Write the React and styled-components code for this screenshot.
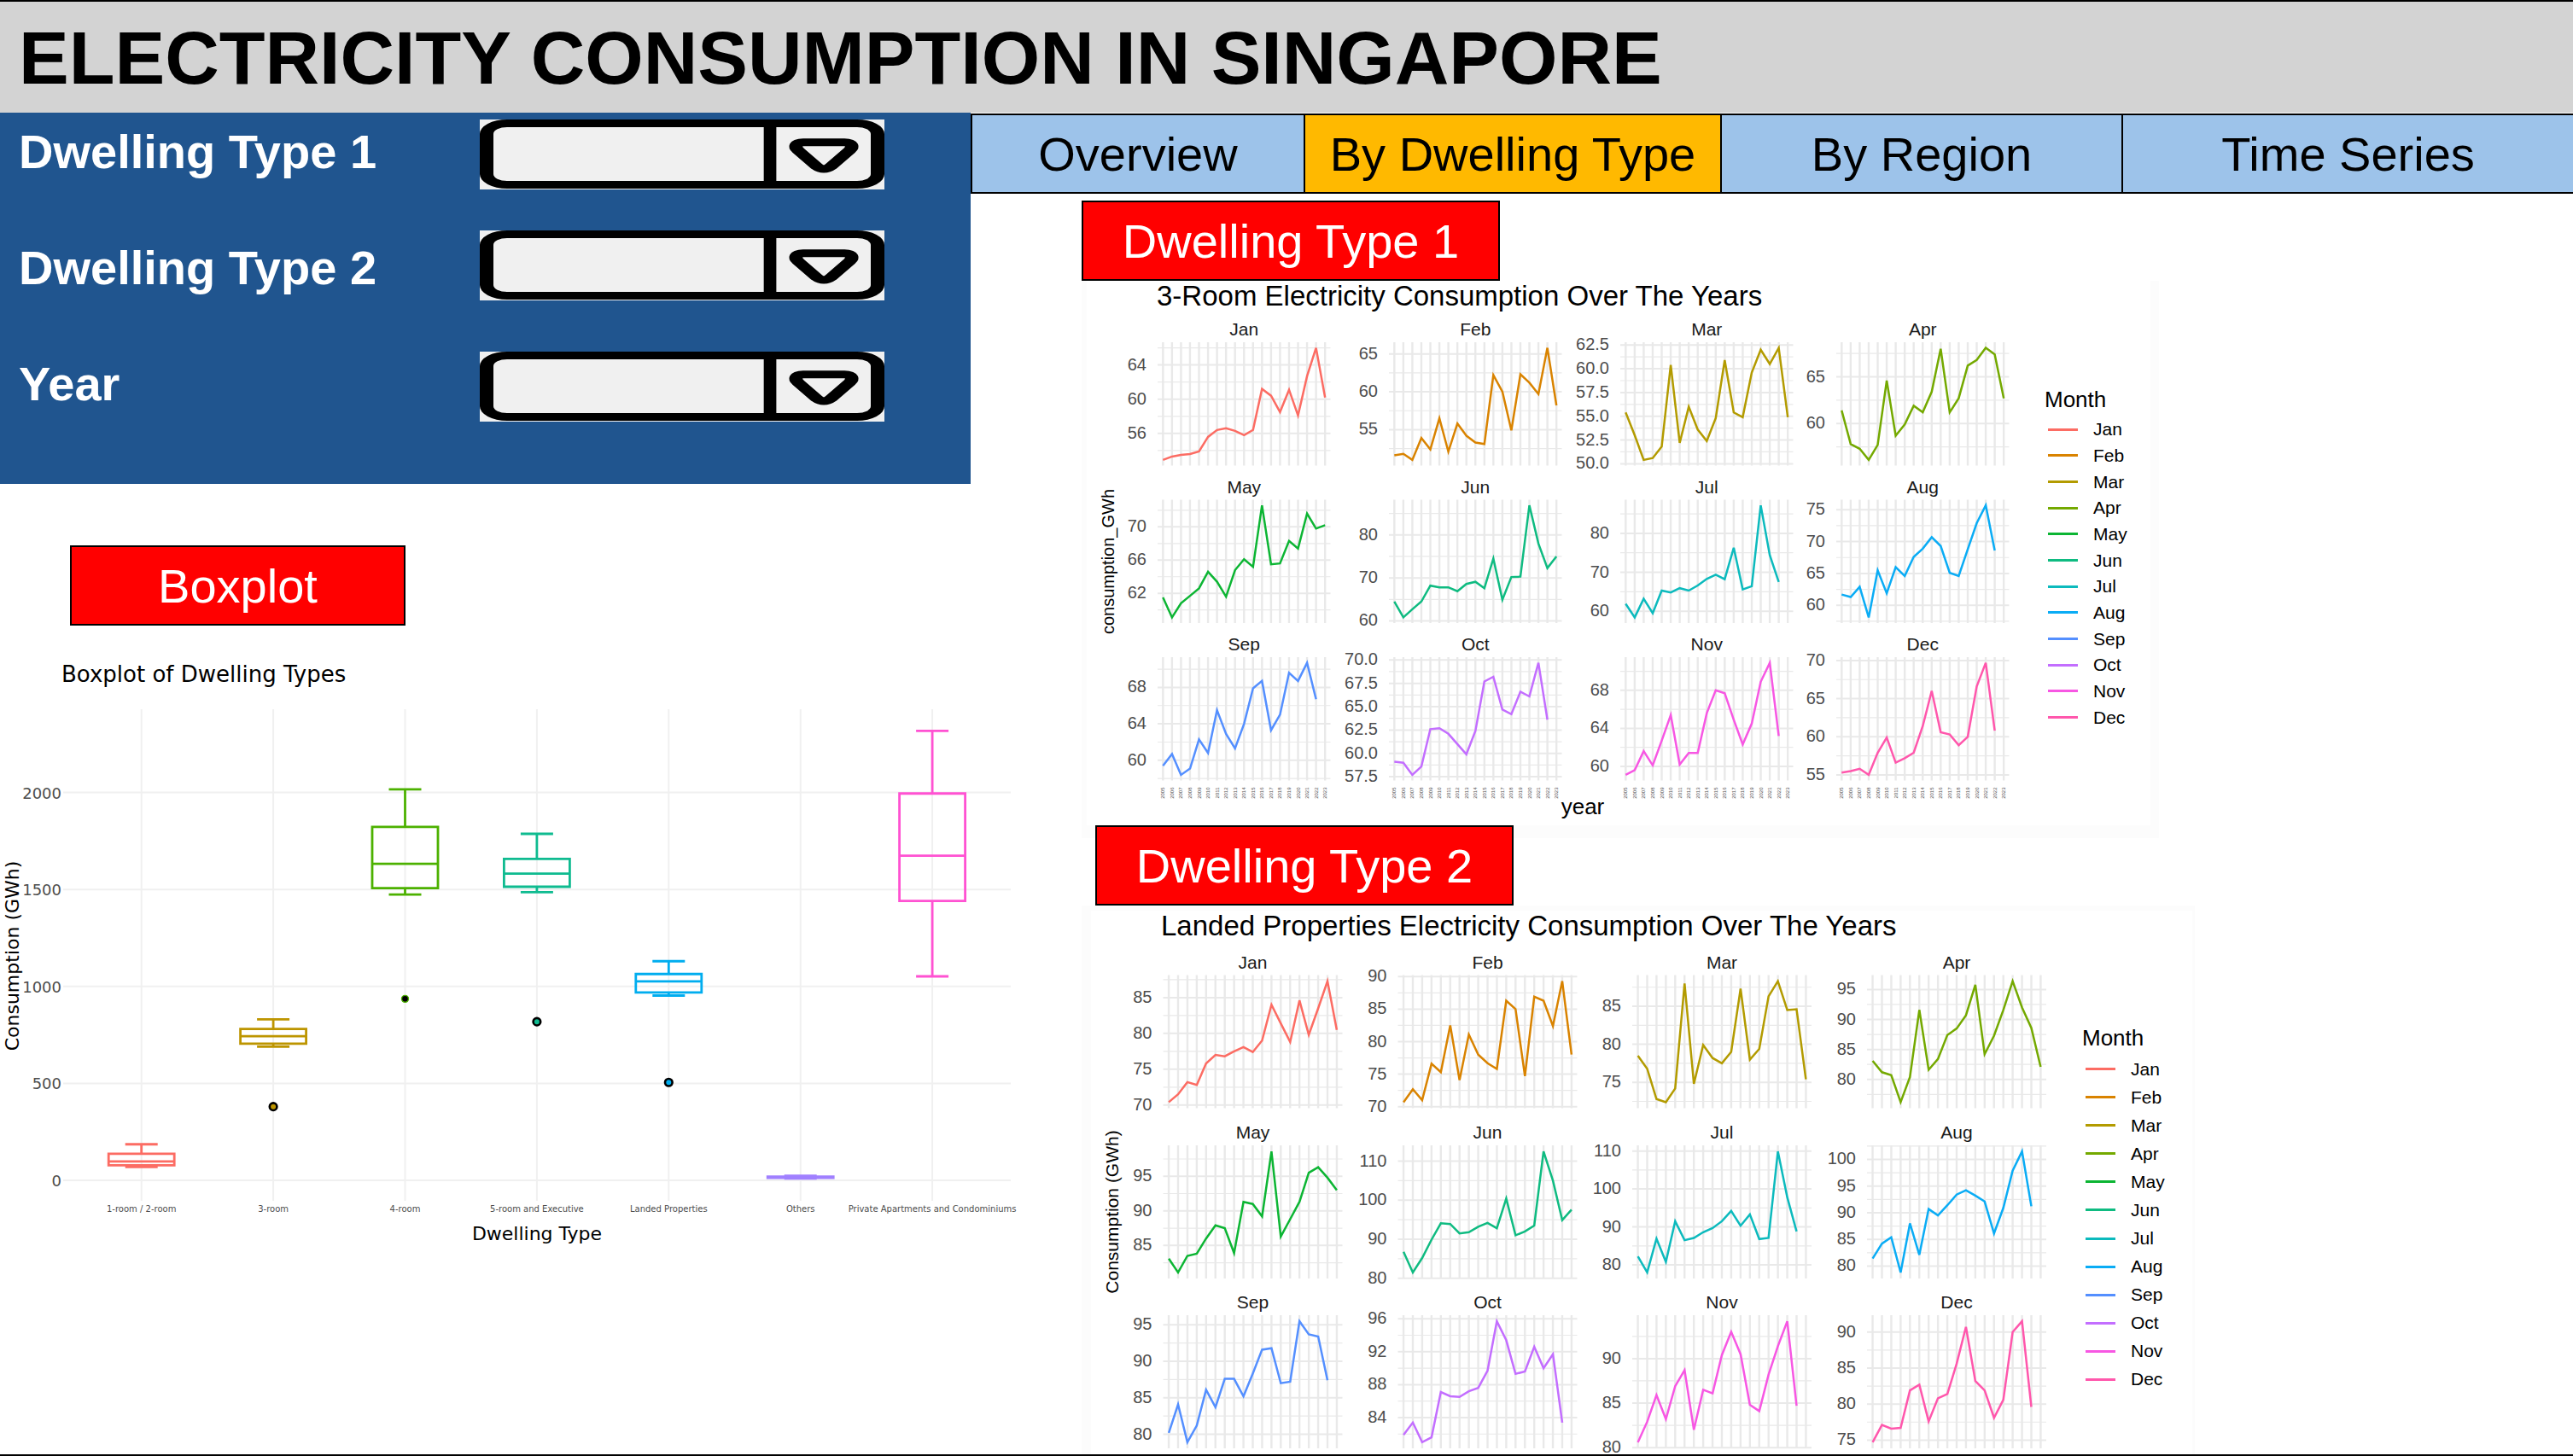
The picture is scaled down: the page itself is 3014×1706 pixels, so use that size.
import React from "react";
import styled, { createGlobalStyle } from "styled-components";

const SANS = '"Liberation Sans", Arial, sans-serif';
const WIDE = '"DejaVu Sans", Verdana, sans-serif';

const GlobalStyle = createGlobalStyle`
  *, *::before, *::after { box-sizing: border-box; }
  body { margin: 0; background: #fff; font-family: ${SANS}; color: #000; }
`;

const Page = styled.div`
  min-height: 100vh;
  display: flex;
  flex-direction: column;
  overflow: hidden;
  border-top: 2px solid #000;
  border-bottom: 2px solid #000;
`;

const Header = styled.header`
  height: 130px;
  padding: 2px 22px 0;
  display: flex;
  align-items: center;
  background: #d3d3d3;
`;

const PageTitle = styled.h1`
  margin: 0;
  font-size: 88px;
  line-height: 1;
  font-weight: 700;
`;

const Body = styled.div`
  flex: 1;
  display: grid;
  grid-template-columns: minmax(0, 1137fr) minmax(0, 1877fr);
`;

const Column = styled.div`
  display: flex;
  flex-direction: column;
  align-items: flex-start;
`;

const FilterPanel = styled.form`
  width: 100%;
  height: 435px;
  display: grid;
  grid-template-columns: 540px 474px;
  padding-left: 22px;
  background: #20558f;
`;

const FilterLabels = styled.div`
  padding-top: 14px;
  display: grid;
  grid-auto-rows: 136px;
`;

const FilterLabel = styled.label`
  color: #fff;
  font-size: 56px;
  line-height: 64px;
  font-weight: 700;
`;

const FilterFields = styled.div`
  padding-top: 8px;
  display: grid;
  grid-template-rows: 130px 142px 82px;
`;

const SelectBox = styled.div`
  display: grid;
  height: 82px;
  background: #f0f0f0;

  & > * { grid-area: 1 / 1; }
`;

const Select = styled.select`
  appearance: none;
  width: 100%;
  height: 81px;
  padding: 0 140px 0 12px;
  border: solid #000;
  border-width: 9px 16px;
  border-radius: 32px / 17px;
  background: #f0f0f0;
  font: 32px ${SANS};
`;

const SelectArrow = styled.svg`
  width: 100%;
  height: 100%;
  pointer-events: none;
`;

const Tabs = styled.nav`
  width: 100%;
  height: 94px;
  margin-top: 1px;
  display: grid;
  grid-template-columns: 388fr 488fr 470fr 529fr;
  border: solid #000;
  border-width: 2px 0 2px 2px;
`;

const Tab = styled.button`
  padding: 0;
  border: 0;
  border-left: ${(p) => (p.$first ? 0 : 2)}px solid #000;
  background: ${(p) => (p.$active ? "#ffb900" : "#9dc3ea")};
  color: #000;
  font: 56px ${SANS};
`;

const Badge = styled.h2`
  position: relative;
  margin: ${(p) => p.$margin};
  width: ${(p) => p.$width}px;
  height: 94px;
  display: flex;
  align-items: center;
  justify-content: center;
  border: 2px solid #000;
  background: #ff0000;
  color: #fff;
  font-size: 56px;
  font-weight: 400;
`;

const Results = styled.main`
  width: 100%;
  padding-left: 130px;
`;

const BoxplotFigure = styled.figure`
  margin: 41px 0 0;
`;

const BoxplotCaption = styled.figcaption`
  padding-left: 72px;
  font: 26px/32px ${WIDE};
`;

const Chart = styled.svg`
  display: block;
  flex: none;
  overflow: visible;
`;

const FacetFigure = styled.figure`
  margin: 0;
  width: ${(p) => p.$width}px;
  max-width: 100%;
  border: solid #fcfcfc;
  border-width: ${(p) => p.$frame};
`;

const FacetCaption = styled.figcaption`
  padding-left: 82px;
  font-size: 33px;
  line-height: 36px;
`;

const FacetRow = styled.div`
  display: flex;
  gap: 15px;
`;

const Legend = styled.div`
  padding-top: ${(p) => p.$top}px;
`;

const LegendTitle = styled.div`
  font-size: 26px;
  line-height: 32px;
`;

const LegendList = styled.ul`
  margin: 4px 0 0;
  padding: 0 0 0 4px;
  height: ${(p) => p.$height}px;
  display: grid;
  grid-auto-rows: 1fr;
  list-style: none;
`;

const LegendItem = styled.li`
  display: flex;
  align-items: center;
  gap: 18px;
  font-size: 21px;
  line-height: 24px;
`;

const LegendLine = styled.span`
  width: 35px;
  height: 3px;
  background: ${(p) => p.$color};
`;

const MONTHS = [
  ["Jan", "#fc6c63"], ["Feb", "#d98300"], ["Mar", "#b39b00"], ["Apr", "#74a900"],
  ["May", "#0cb533"], ["Jun", "#0fbb81"], ["Jul", "#0cbabd"], ["Aug", "#0aacf5"],
  ["Sep", "#548fff"], ["Oct", "#c36eff"], ["Nov", "#f757e3"], ["Dec", "#ff57ac"],
];

const THREE_ROOM = [
  { breaks: [56, 60, 64], values: [52.9, 53.3, 53.5, 53.6, 53.9, 55.6, 56.4, 56.6, 56.3, 55.8, 56.4, 61.2, 60.4, 58.5, 61.1, 58.1, 62.7, 66, 60.2] },
  { breaks: [55, 60, 65], values: [51.6, 51.8, 51, 53.9, 52.4, 56.5, 52.1, 55.8, 54.2, 53.3, 53.1, 62.2, 60, 54.9, 62.3, 61.2, 59.7, 65.8, 58.2] },
  { breaks: [50, 52.5, 55, 57.5, 60, 62.5], values: [55.4, 53, 50.4, 50.6, 51.8, 60.4, 52.2, 56, 53.6, 52.4, 54.8, 60.9, 55.4, 54.9, 59.6, 62, 60.5, 62.2, 54.9] },
  { breaks: [60, 65], values: [61.4, 57.8, 57.3, 56.1, 57.7, 64.6, 58.7, 59.9, 61.9, 61.2, 63.4, 68, 61.2, 62.7, 66.2, 66.8, 68.1, 67.4, 62.7] },
  { breaks: [62, 66, 70], values: [61.5, 59.1, 60.8, 61.7, 62.6, 64.6, 63.4, 61.6, 64.8, 66.1, 65.2, 72.6, 65.5, 65.6, 68.3, 67.4, 71.6, 69.8, 70.2] },
  { breaks: [60, 70, 80], values: [64.5, 60.8, 62.7, 64.5, 68.2, 67.8, 67.8, 66.9, 68.6, 69.1, 67.6, 74.5, 64.9, 70.2, 70.3, 86.9, 78, 72.3, 75] },
  { breaks: [60, 70, 80], values: [61.9, 58.4, 63.2, 59.5, 65.3, 64.8, 65.9, 65.3, 66.6, 68.3, 69.4, 68.2, 76.3, 65.6, 66.4, 87.2, 74.4, 67.5] },
  { breaks: [60, 65, 70, 75], values: [61.7, 61.3, 62.9, 58.1, 65.5, 61.9, 66, 64.6, 67.6, 68.9, 70.7, 69.3, 65.1, 64.6, 68.8, 72.9, 75.7, 68.6] },
  { breaks: [60, 64, 68], values: [59.4, 60.7, 58.4, 59.1, 62.3, 60.8, 65.5, 62.9, 61.3, 64, 67.9, 68.7, 63.3, 65, 69.6, 68.7, 70.7, 66.7] },
  { breaks: [57.5, 60, 62.5, 65, 67.5, 70], values: [59.1, 59, 57.7, 58.6, 62.6, 62.7, 62.1, 61, 59.9, 62.4, 67.7, 68.2, 64.7, 64.2, 66.6, 66.1, 69.7, 63.6] },
  { breaks: [60, 64, 68], values: [59.1, 59.6, 61.6, 60.1, 62.7, 65.4, 60.2, 61.4, 61.4, 65.6, 68, 67.7, 64.9, 62.3, 64.5, 68.9, 70.9, 63.2] },
  { breaks: [55, 60, 65, 70], values: [55.3, 55.5, 55.8, 55, 57.9, 59.9, 56.6, 57.2, 57.9, 61.4, 66, 60.6, 60.3, 58.9, 60, 66.6, 69.7, 60.8] },
];

const LANDED = [
  { breaks: [70, 75, 80, 85], values: [70.4, 71.5, 73.2, 72.8, 75.8, 77, 76.8, 77.5, 78.1, 77.4, 79, 84, 81.4, 78.8, 84.6, 79.8, 83.5, 87.3, 80.5] },
  { breaks: [70, 75, 80, 85, 90], values: [70.7, 72.7, 71, 76.6, 75.3, 82.5, 74.1, 81.1, 78, 76.7, 75.8, 86.3, 85, 74.7, 86.9, 86.3, 82.4, 89.3, 78] },
  { breaks: [75, 80, 85], values: [78.5, 76.8, 72.8, 72.4, 74.2, 88, 74.8, 79.9, 78.2, 77.5, 79, 87.3, 78, 79.4, 86.3, 88.3, 84.5, 84.6, 75.4] },
  { breaks: [80, 85, 90, 95], values: [83.1, 81.2, 80.7, 76.2, 80.4, 91.6, 81.6, 83.4, 87.4, 88.5, 90.7, 95.8, 84.2, 87.3, 91.6, 96.4, 92, 88.6, 82.1] },
  { breaks: [85, 90, 95], values: [83.1, 81.1, 83.5, 83.8, 86, 87.9, 87.5, 83.9, 91.3, 91, 89.2, 98.6, 86.3, 88.8, 91.3, 95.5, 96.3, 94.8, 93] },
  { breaks: [80, 90, 100, 110], values: [86.8, 81.5, 85.2, 89.9, 94.1, 93.9, 91.5, 91.8, 93.2, 94.2, 92.8, 100.4, 91, 92, 93.5, 112.5, 105, 94.9, 97.6] },
  { breaks: [80, 90, 100, 110], values: [82.2, 78, 86.9, 80.8, 91.5, 86.5, 87.1, 88.6, 89.7, 91.5, 94.2, 90.3, 93.3, 86.8, 87.1, 109.9, 97.8, 88.8] },
  { breaks: [80, 85, 90, 95, 100], values: [81.4, 84.2, 85.4, 78.8, 88, 82.1, 90.7, 89.5, 91.4, 93.4, 94.2, 93.2, 92.1, 86.1, 90.9, 97.9, 101.5, 91.2] },
  { breaks: [80, 85, 90, 95], values: [80.2, 84.1, 78.9, 81.2, 86.1, 83.7, 87.6, 87.6, 85.2, 88.3, 91.6, 91.8, 87, 87.2, 95.5, 93.7, 93.4, 87.4] },
  { breaks: [84, 88, 92, 96], values: [81.9, 83.4, 81, 81.6, 87.1, 86.6, 86.5, 87.2, 87.6, 89.7, 95.7, 93.4, 89.3, 89.6, 92.6, 90, 91.7, 83.4] },
  { breaks: [80, 85, 90], values: [80.6, 82.9, 85.9, 83.2, 86.9, 88.7, 82, 86.5, 86.1, 90.4, 93, 90.5, 84.8, 84.1, 88.2, 91.4, 94.2, 84.7] },
  { breaks: [75, 80, 85, 90], values: [74.7, 77.1, 76.6, 76.7, 81.9, 82.7, 77.6, 80.8, 81.4, 85.6, 90.7, 83.2, 81.9, 78.1, 80.6, 90, 91.5, 79.6] },
];

const YEARS = Array.from({ length: 19 }, (_, i) => 2005 + i);

function Facet({ x, y, width, height, name, color, data, showYears }) {
  const { breaks, values } = data;
  const lo = Math.min(...values);
  const hi = Math.max(...values);
  const pad = (hi - lo) * 0.05;
  const min = lo - pad;
  const max = hi + pad;
  const sy = (v) => y + height - ((v - min) / (max - min)) * height;
  const unit = width / 19.2;
  const sx = (i) => x + unit * (i + 0.6);
  const step = breaks[1] - breaks[0];
  const minors = [];
  for (let m = breaks[0] - step / 2; m <= max; m += step) if (m >= min) minors.push(m);
  const decimals = breaks.some((b) => b % 1) ? 1 : 0;
  return (
    <g>
      <text x={x + width / 2} y={y - 8} textAnchor="middle" fontSize="21" fill="#1a1a1a">{name}</text>
      <g stroke="#e9e9e9">
        {minors.map((m) => <line key={m} x1={x} x2={x + width} y1={sy(m)} y2={sy(m)} strokeWidth="1.2" />)}
        {breaks.map((b) => <line key={b} x1={x} x2={x + width} y1={sy(b)} y2={sy(b)} strokeWidth="2" />)}
        {YEARS.map((yr, i) => <line key={yr} x1={sx(i)} x2={sx(i)} y1={y} y2={y + height} strokeWidth="2.4" />)}
      </g>
      {breaks.map((b) => (
        <text key={b} x={x - 13} y={sy(b) + 6} textAnchor="end" fontSize="20" fill="#4d4d4d">{b.toFixed(decimals)}</text>
      ))}
      <polyline
        points={values.map((v, i) => `${sx(i).toFixed(1)},${sy(v).toFixed(1)}`).join(" ")}
        fill="none" stroke={color} strokeWidth="2.5"
      />
      {showYears && YEARS.map((yr, i) => (
        <text key={yr} transform={`translate(${sx(i) + 2} ${y + height + 8}) rotate(-90)`} textAnchor="end" fontSize="6" fill="#4d4d4d">{yr}</text>
      ))}
    </g>
  );
}

function FacetChart({ title, frame, width, svg, cols, rows, cell, data, yTitle, xTitle, legend }) {
  return (
    <FacetFigure $width={width} $frame={frame}>
      <FacetCaption>{title}</FacetCaption>
      <FacetRow>
        <Chart width={svg.width} height={svg.height} viewBox={`0 0 ${svg.width} ${svg.height}`} fontFamily={SANS} role="img" aria-label={title}>
          {data.map((d, i) => (
            <Facet
              key={MONTHS[i][0]}
              x={cols[i % 4]}
              y={rows[Math.floor(i / 4)]}
              width={cell.width}
              height={cell.height}
              name={MONTHS[i][0]}
              color={MONTHS[i][1]}
              data={d}
              showYears={Boolean(xTitle) && i >= 8}
            />
          ))}
          <text transform={`translate(32 ${yTitle.y}) rotate(-90)`} textAnchor="middle" fontSize={yTitle.size}>{yTitle.text}</text>
          {xTitle && <text x={xTitle.x} y={xTitle.y} textAnchor="middle" fontSize="26">{xTitle.text}</text>}
        </Chart>
        <Legend $top={legend.top}>
          <LegendTitle>Month</LegendTitle>
          <LegendList $height={legend.height}>
            {MONTHS.map(([name, color]) => (
              <LegendItem key={name}><LegendLine $color={color} />{name}</LegendItem>
            ))}
          </LegendList>
        </Legend>
      </FacetRow>
    </FacetFigure>
  );
}

const BOXES = [
  { name: "1-room / 2-room", color: "#fc6c63", q: [69, 78, 97, 137, 186] },
  { name: "3-room", color: "#bd9500", q: [689, 705, 743, 781, 830], out: 380 },
  { name: "4-room", color: "#4cb100", q: [1474, 1507, 1632, 1823, 2016], out: 936, solid: true },
  { name: "5-room and Executive", color: "#0fbb90", q: [1486, 1514, 1582, 1658, 1787], out: 818 },
  { name: "Landed Properties", color: "#00adef", q: [953, 969, 1026, 1064, 1130], out: 505 },
  { name: "Others", color: "#a080ff", q: [9, 13, 16, 19, 23] },
  { name: "Private Apartments and Condominiums", color: "#ff52d2", q: [1052, 1441, 1674, 1995, 2318] },
];

function Boxplot() {
  const sy = (v) => 577 - v * 0.2272;
  const sx = (i) => 165.7 + i * 154.4;
  return (
    <Chart width="1200" height="660" viewBox="0 0 1200 660" fontFamily={WIDE} role="img" aria-label="Boxplot of Dwelling Types">
      <g stroke="#f0f0f0" strokeWidth="2">
        {[0, 500, 1000, 1500, 2000].map((v) => <line key={v} x1="74" x2="1184" y1={sy(v)} y2={sy(v)} />)}
        {BOXES.map((b, i) => <line key={b.name} x1={sx(i)} x2={sx(i)} y1="25" y2="601" />)}
      </g>
      {[0, 500, 1000, 1500, 2000].map((v) => (
        <text key={v} x="72" y={sy(v) + 7} textAnchor="end" fontSize="18" fill="#4d4d4d">{v}</text>
      ))}
      {BOXES.map((b, i) => {
        const x = sx(i);
        const [low, q1, med, q3, high] = b.q.map(sy);
        return (
          <g key={b.name}>
            <path
              d={`M${x - 38.5} ${q3}H${x + 38.5}V${q1}H${x - 38.5}ZM${x - 38.5} ${med}H${x + 38.5}M${x} ${q3}V${high}M${x} ${q1}V${low}M${x - 19} ${high}H${x + 19}M${x - 19} ${low}H${x + 19}`}
              fill="none" stroke={b.color} strokeWidth="2.8"
            />
            {b.out && (
              <circle
                cx={x} cy={sy(b.out)} r={b.solid ? 4 : 4.3}
                fill={b.solid ? "#000" : b.color}
                stroke={b.solid ? b.color : "#000"}
                strokeWidth={b.solid ? 1.4 : 2.6}
              />
            )}
            <text x={x} y="614" textAnchor="middle" fontSize="10" fill="#4d4d4d">{b.name}</text>
          </g>
        );
      })}
      <text x="629" y="647" textAnchor="middle" fontSize="22">Dwelling Type</text>
      <text transform="translate(22 314) rotate(-90)" textAnchor="middle" fontSize="22">Consumption (GWh)</text>
    </Chart>
  );
}

function FilterSelect({ id }) {
  return (
    <SelectBox>
      <Select id={id} name={id} defaultValue="">
        <option value=""></option>
      </Select>
      <SelectArrow viewBox="0 0 474 82" aria-hidden="true">
        <g transform="scale(1.75 1)" fill="none" stroke="#000">
          <path d="M194.3 4V78" strokeWidth="8.4" />
          <path d="M216.5 26.7H244.1C249.5 26.7 250 32 247.6 36L235 55Q230.3 61 225.6 55L213 36C210.6 32 211.1 26.7 216.5 26.7Z" strokeWidth="9" />
        </g>
      </SelectArrow>
    </SelectBox>
  );
}

const FILTERS = [
  ["dwelling-1", "Dwelling Type 1"],
  ["dwelling-2", "Dwelling Type 2"],
  ["year", "Year"],
];

const TABS = ["Overview", "By Dwelling Type", "By Region", "Time Series"];

export default function App() {
  return (
    <>
      <GlobalStyle />
      <Page>
        <Header>
          <PageTitle>ELECTRICITY CONSUMPTION IN SINGAPORE</PageTitle>
        </Header>
        <Body>
          <Column>
            <FilterPanel>
              <FilterLabels>
                {FILTERS.map(([id, text]) => <FilterLabel key={id} htmlFor={id}>{text}</FilterLabel>)}
              </FilterLabels>
              <FilterFields>
                {FILTERS.map(([id]) => <FilterSelect key={id} id={id} />)}
              </FilterFields>
            </FilterPanel>
            <Badge $width={393} $margin="72px 0 0 82px">Boxplot</Badge>
            <BoxplotFigure>
              <BoxplotCaption>Boxplot of Dwelling Types</BoxplotCaption>
              <Boxplot />
            </BoxplotFigure>
          </Column>
          <Column>
            <Tabs>
              {TABS.map((t, i) => (
                <Tab key={t} type="button" $first={i === 0} $active={i === 1}>{t}</Tab>
              ))}
            </Tabs>
            <Results>
              <Badge $width={490} $margin="8px 0 0">Dwelling Type 1</Badge>
              <FacetChart
                title="3-Room Electricity Consumption Over The Years"
                width={1262}
                frame="0 10px 15px 6px"
                svg={{ width: 1107, height: 602 }}
                cols={[83, 354, 625, 878]}
                rows={[36, 220.5, 405]}
                cell={{ width: 202.5, height: 144.5 }}
                data={THREE_ROOM}
                yTitle={{ text: "consumption_GWh", y: 293, size: 20 }}
                xTitle={{ text: "year", x: 581, y: 589 }}
                legend={{ top: 87, height: 368 }}
              />
              <Badge $width={490} $margin="-15px 0 0 16px">Dwelling Type 2</Badge>
              <FacetChart
                title="Landed Properties Electricity Consumption Over The Years"
                width={1304}
                frame="6px 3px 0 11px"
                svg={{ width: 1146, height: 601 }}
                cols={[84.5, 359.5, 634, 909]}
                rows={[39.5, 239, 438]}
                cell={{ width: 210, height: 156 }}
                data={LANDED}
                yTitle={{ text: "Consumption (GWh)", y: 317, size: 21 }}
                legend={{ top: 97, height: 397 }}
              />
            </Results>
          </Column>
        </Body>
      </Page>
    </>
  );
}
